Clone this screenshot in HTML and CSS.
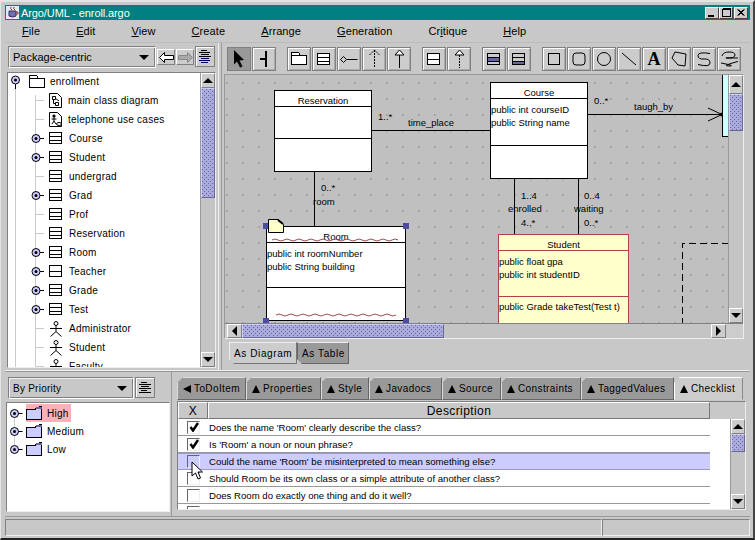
FILE: index.html
```html
<!DOCTYPE html>
<html lang="en">
<head>
    <meta charset="UTF-8">
    <title>Argo/UML - enroll.argo</title>
    <link rel="stylesheet" href="styles.css">
</head>
<body>

<svg class="defs" width="0" height="0">
    <symbol id="i-class" viewBox="0 0 14 13"><path d="M.5.5h12v11H.5zM.5 4.5h12M.5 8.5h12" fill="#fff" stroke="#000" shape-rendering="crispEdges"/></symbol>
    <symbol id="i-iface" viewBox="0 0 14 13"><path d="M.5.5h12v11H.5zM.5 6.5h12" fill="#fff" stroke="#000" shape-rendering="crispEdges"/></symbol>
    <symbol id="i-folder" viewBox="0 0 16 13"><path d="M.5 12.5V.5h7l2 3h6v9z M9.5 3.5H.5" fill="#fff" stroke="#000" shape-rendering="crispEdges"/></symbol>
    <symbol id="i-diagram" viewBox="0 0 14 15"><path d="M.5.5h8l4 4v10H.5z" fill="#fff" stroke="#000"/><path d="M3.5 3.5h3v3h-3zM4.5 6.5v4h2M6.5 9.5h3v3h-3zM6 5l4 3" fill="none" stroke="#000"/></symbol>
    <symbol id="i-usecase" viewBox="0 0 14 15"><path d="M.5.5h8l4 4v10H.5z" fill="#fff" stroke="#000"/><circle cx="5" cy="4" r="1.6"/><path d="M5 5v4M2.5 7h5M5 9l-2 3M5 9l2 3" fill="none" stroke="#000"/><ellipse cx="10" cy="12" rx="2.5" ry="1.5" fill="#fff" stroke="#000"/></symbol>
    <symbol id="i-actor" viewBox="0 0 14 16"><circle cx="7" cy="2.5" r="2" fill="#fff" stroke="#000"/><path d="M7 4.5v6M1 7.5h12M7 10.5l-5.500 5M7 10.500l5.500 5" fill="none" stroke="#000"/></symbol>
    <symbol id="i-open" viewBox="0 0 11 14"><circle cx="5.500" cy="5" r="4" fill="#ccccff" stroke="#000"/><circle cx="5.500" cy="5" r="1.500" fill="#000"/><path d="M5.500 9v5" stroke="#000"/></symbol>
    <symbol id="i-closed" viewBox="0 0 13 11"><circle cx="5" cy="5.500" r="4" fill="#ccccff" stroke="#000"/><circle cx="5" cy="5.500" r="1.500" fill="#000"/><path d="M9 5.500h4" stroke="#000"/></symbol>
    <symbol id="i-stub" viewBox="0 0 13 11"><path d="M4 5.500h9" stroke="#ccc"/></symbol>
    <symbol id="i-bluefolder" viewBox="0 0 17 14"><path d="M.5 3.500h9l1-2 5-1v13H.5z" fill="#ccccff" stroke="#000" shape-rendering="crispEdges"/><path d="M10 1h6v2h-6z" fill="#666699"/></symbol>
    <symbol id="i-lines" viewBox="0 0 14 14"><path d="M3 1.500h6M1 3.500h12M3 5.500h8M1 7.500h12M3 9.500h6M1 11.500h12" stroke="#000" shape-rendering="crispEdges"/></symbol>
    <symbol id="i-explorer" viewBox="0 0 14 16"><path d="M3 1.500h6M1 3.500h11M3 5.500h8M1 7.500h12" stroke="#000" shape-rendering="crispEdges"/><path d="M3 9.500h8M1 11.500h11M3 13.500h7" stroke="#000066" shape-rendering="crispEdges"/></symbol>
</svg>

<div class="window">
    <div class="titlebar">
        <svg class="title-icon" width="13" height="13" viewBox="0 0 13 13">
            <rect width="13" height="13" fill="#e8e8f0"/>
            <path d="M3 5h7v5q-3.500 2-7 0z" fill="#7070b0" stroke="#303060"/>
            <path d="M5 1q-1 2 1 3M8 1q-1 2 1 3M10 6h2v2h-2" fill="none" stroke="#a03030"/>
        </svg>
        <span class="title-text">Argo/UML - enroll.argo</span>
        <div class="win-buttons">
            <button class="win-btn"><svg width="8" height="8" viewBox="0 0 8 8"><path d="M0 6h6v2H0z"/></svg></button>
            <button class="win-btn"><svg width="9" height="9" viewBox="0 0 9 9"><path d="M.5 1.500h8v7h-8zM.5.500h8" fill="none" stroke="#000" shape-rendering="crispEdges"/></svg></button>
            <button class="win-btn win-close"><svg width="8" height="8" viewBox="0 0 8 8"><path d="M.5.500l6 6M6.500.500l-6 6M1.500.500l6 6M7.500.500l-6 6" stroke="#000" fill="none"/></svg></button>
        </div>
    </div>

    <div class="menubar">
        <span><u>F</u>ile</span>
        <span><u>E</u>dit</span>
        <span><u>V</u>iew</span>
        <span><u>C</u>reate</span>
        <span><u>A</u>rrange</span>
        <span><u>G</u>eneration</span>
        <span>Cr<u>i</u>tique</span>
        <span><u>H</u>elp</span>
    </div>

    <div class="top-split">
        <div class="nav-pane">
            <div class="nav-tools">
                <div class="combo combo-nav">Package-centric<i class="combo-arrow"></i></div>
                <button class="nav-btn">
                    <svg width="15" height="11" viewBox="0 0 15 11"><path d="M.5 5.500l5-5v3h9v4h-9v3z" fill="#fff" stroke="#000"/></svg>
                </button>
                <button class="nav-btn">
                    <svg width="15" height="11" viewBox="0 0 15 11"><path d="M14.500 5.500l-5-5v3h-9v4h9v3z" fill="#aaa" stroke="#888"/></svg>
                </button>
                <button class="icon-btn"><svg width="14" height="16"><use href="#i-explorer"/></svg></button>
            </div>
            <div class="tree-frame">
                <div class="tree-list">
                    <div class="tree-row lvl0"><svg class="h-open" width="11" height="14"><use href="#i-open"/></svg><svg class="ic-folder" width="16" height="13"><use href="#i-folder"/></svg><span>enrollment</span></div>
                    <div class="tree-row lvl1 tight"><svg width="13" height="11"><use href="#i-stub"/></svg><svg class="ic" width="14" height="15"><use href="#i-diagram"/></svg><span>main class diagram</span></div>
                    <div class="tree-row lvl1 tight"><svg width="13" height="11"><use href="#i-stub"/></svg><svg class="ic" width="14" height="15"><use href="#i-usecase"/></svg><span>telephone use cases</span></div>
                    <div class="tree-row lvl1"><svg width="13" height="11"><use href="#i-closed"/></svg><svg class="ic" width="14" height="13"><use href="#i-class"/></svg><span>Course</span></div>
                    <div class="tree-row lvl1"><svg width="13" height="11"><use href="#i-closed"/></svg><svg class="ic" width="14" height="13"><use href="#i-class"/></svg><span>Student</span></div>
                    <div class="tree-row lvl1"><svg width="13" height="11"><use href="#i-stub"/></svg><svg class="ic" width="14" height="13"><use href="#i-class"/></svg><span>undergrad</span></div>
                    <div class="tree-row lvl1"><svg width="13" height="11"><use href="#i-closed"/></svg><svg class="ic" width="14" height="13"><use href="#i-class"/></svg><span>Grad</span></div>
                    <div class="tree-row lvl1"><svg width="13" height="11"><use href="#i-stub"/></svg><svg class="ic" width="14" height="13"><use href="#i-class"/></svg><span>Prof</span></div>
                    <div class="tree-row lvl1"><svg width="13" height="11"><use href="#i-stub"/></svg><svg class="ic" width="14" height="13"><use href="#i-class"/></svg><span>Reservation</span></div>
                    <div class="tree-row lvl1"><svg width="13" height="11"><use href="#i-closed"/></svg><svg class="ic" width="14" height="13"><use href="#i-class"/></svg><span>Room</span></div>
                    <div class="tree-row lvl1"><svg width="13" height="11"><use href="#i-closed"/></svg><svg class="ic" width="14" height="13"><use href="#i-iface"/></svg><span>Teacher</span></div>
                    <div class="tree-row lvl1"><svg width="13" height="11"><use href="#i-closed"/></svg><svg class="ic" width="14" height="13"><use href="#i-class"/></svg><span>Grade</span></div>
                    <div class="tree-row lvl1"><svg width="13" height="11"><use href="#i-closed"/></svg><svg class="ic" width="14" height="13"><use href="#i-class"/></svg><span>Test</span></div>
                    <div class="tree-row lvl1"><svg width="13" height="11"><use href="#i-stub"/></svg><svg class="ic" width="14" height="16"><use href="#i-actor"/></svg><span>Administrator</span></div>
                    <div class="tree-row lvl1"><svg width="13" height="11"><use href="#i-stub"/></svg><svg class="ic" width="14" height="16"><use href="#i-actor"/></svg><span>Student</span></div>
                    <div class="tree-row lvl1"><svg width="13" height="11"><use href="#i-stub"/></svg><svg class="ic" width="14" height="16"><use href="#i-actor"/></svg><span>Faculty</span></div>
                </div>
                <div class="vscroll vscroll-nav">
                    <button class="sb-btn"><i class="tri-up"></i></button>
                    <div class="sb-thumb"></div>
                    <div class="sb-track"></div>
                    <button class="sb-btn"><i class="tri-down"></i></button>
                </div>
            </div>
        </div>

        <div class="editor-pane">
            <div class="toolbar">
                <div class="tool-group">
                    <button class="tool pressed"><svg width="18" height="20" viewBox="0 0 18 20"><path d="M4 1l10 10-4.500.5 3 6-2.500 1-3-6-3 3z"/></svg></button>
                    <button class="tool"><svg width="18" height="20" viewBox="0 0 18 20"><path d="M11 2v16M5 10h6" stroke="#000" stroke-width="2" fill="none" shape-rendering="crispEdges"/></svg></button>
                </div>
                <div class="tool-group">
                    <button class="tool"><svg width="18" height="14" viewBox="0 0 18 14"><use href="#i-folder" width="16" height="13" x="1"/></svg></button>
                    <button class="tool"><svg width="14" height="13"><use href="#i-class"/></svg></button>
                    <button class="tool"><svg width="18" height="9" viewBox="0 0 18 9"><path d="M.5 4.500l3-3 3 3-3 3zM6.500 4.500h11" fill="none" stroke="#000"/></svg></button>
                    <button class="tool"><svg width="11" height="20" viewBox="0 0 11 20"><path d="M.5 6l5-5 5 5M5.500 1v18" fill="none" stroke="#000" stroke-dasharray="2 1"/></svg></button>
                    <button class="tool"><svg width="11" height="20" viewBox="0 0 11 20"><path d="M1 6l4.500-5L10 6zM5.500 6v13" fill="#fff" stroke="#000"/></svg></button>
                </div>
                <div class="tool-group">
                    <button class="tool"><svg width="14" height="13"><use href="#i-iface"/></svg></button>
                    <button class="tool"><svg width="11" height="20" viewBox="0 0 11 20"><path d="M1 6l4.500-5L10 6z" fill="#fff" stroke="#000"/><path d="M5.500 6v13" stroke="#000" stroke-dasharray="2 1"/></svg></button>
                </div>
                <div class="tool-group">
                    <button class="tool"><svg width="14" height="13" viewBox="0 0 14 13"><rect x="1" y="5" width="11" height="3" fill="#666699"/><path d="M.5.5h12v11H.5zM.5 4.500h12M.5 8.500h12" fill="none" stroke="#000" shape-rendering="crispEdges"/></svg></button>
                    <button class="tool"><svg width="14" height="13" viewBox="0 0 14 13"><rect x="1" y="8" width="11" height="3" fill="#666699"/><path d="M.5.5h12v11H.5zM.5 4.500h12M.5 8.500h12" fill="none" stroke="#000" shape-rendering="crispEdges"/></svg></button>
                </div>
                <div class="tool-group">
                    <button class="tool"><svg width="14" height="14" viewBox="0 0 14 14"><path d="M1.500 1.500h11v11h-11z" fill="none" stroke="#000" shape-rendering="crispEdges"/></svg></button>
                    <button class="tool"><svg width="14" height="14" viewBox="0 0 14 14"><rect x="1" y="1" width="12" height="12" rx="3" fill="none" stroke="#000"/></svg></button>
                    <button class="tool"><svg width="16" height="16" viewBox="0 0 16 16"><circle cx="8" cy="8" r="6.500" fill="none" stroke="#000"/></svg></button>
                    <button class="tool"><svg width="16" height="14" viewBox="0 0 16 14"><path d="M1 1l14 12" stroke="#000" fill="none"/></svg></button>
                    <button class="tool tool-a">A</button>
                    <button class="tool"><svg width="18" height="18" viewBox="0 0 18 18"><path d="M5 2l11 2-1 12-7-1-6-7z" fill="none" stroke="#000"/></svg></button>
                    <button class="tool"><svg width="16" height="16" viewBox="0 0 16 16"><path d="M14 2.500Q2 .5 2 4.500t6 3.500 6 4-12 1.500" fill="none" stroke="#000"/></svg></button>
                    <button class="tool"><svg width="18" height="16" viewBox="0 0 18 16"><path d="M2 5Q3 1 9 1t6 3-7 3 8 0 0 4-7 4-8-3" fill="none" stroke="#000"/></svg></button>
                </div>
            </div>

            <div class="canvas-frame">
                <div class="canvas-row">
                    <div class="canvas">
                        <svg class="wires" width="505" height="250" viewBox="225 75 505 250">
                            <g stroke="#000" fill="none" shape-rendering="crispEdges">
                                <path d="M371 130.500h119M587 114.500h135M314.500 171v56M514.500 178v57M578.500 178v57"/>
                            </g>
                            <path d="M708 108l14 6.500-14 6.500" stroke="#000" fill="none"/>
                            <circle cx="722" cy="114.500" r="2"/>
                            <path d="M682.500 325V243H729" stroke="#000" fill="none" stroke-dasharray="7 4" shape-rendering="crispEdges"/>
                        </svg>

                        <div class="uml reservation">
                            <div class="uml-name">Reservation</div>
                            <div class="uml-attrs"></div>
                            <div class="uml-ops"></div>
                        </div>

                        <div class="uml course">
                            <div class="uml-name">Course</div>
                            <div class="uml-attrs">public int courseID<br>public String name</div>
                            <div class="uml-ops"></div>
                        </div>

                        <div class="uml room">
                            <div class="uml-name">Room</div>
                            <div class="uml-attrs">public int roomNumber<br>public String building</div>
                            <div class="uml-ops"></div>
                        </div>

                        <div class="uml uml-selected student">
                            <div class="uml-name">Student</div>
                            <div class="uml-attrs">public float gpa<br>public int studentID</div>
                            <div class="uml-ops">public Grade takeTest(Test t)</div>
                        </div>

                        <div class="teacher-edge"></div>

                        <span class="lbl l-res-mult">1..*</span>
                        <span class="lbl l-time">time_place</span>
                        <span class="lbl l-course-mult">0..*</span>
                        <span class="lbl l-taugh">taugh_by</span>
                        <span class="lbl l-room-mult">0..*</span>
                        <span class="lbl l-room">room</span>
                        <span class="lbl l-en1">1..4</span>
                        <span class="lbl l-en">enrolled</span>
                        <span class="lbl l-en2">4..*</span>
                        <span class="lbl l-wa1">0..4</span>
                        <span class="lbl l-wa">waiting</span>
                        <span class="lbl l-wa2">0..*</span>

                        <svg class="wavy" width="505" height="250" viewBox="225 75 505 250">
                            <path d="M272 240q3-2 6 0t6 0 6 0 6 0 6 0 6 0 6 0 6 0 6 0 6 0 6 0 6 0 6 0 6 0 6 0 6 0 6 0 6 0 6 0 6 0 6 0" stroke="#a05050" fill="none"/>
                            <path d="M276 315q3-2 6 0t6 0 6 0 6 0 6 0 6 0 6 0 6 0 6 0 6 0 6 0 6 0 6 0 6 0 6 0 6 0 6 0 6 0 6 0 6 0" stroke="#a05050" fill="none"/>
                            <g fill="#4c4ca0">
                                <rect x="263" y="223" width="6" height="6"/>
                                <rect x="403" y="223" width="6" height="6"/>
                                <rect x="263" y="318" width="6" height="6"/>
                                <rect x="403" y="318" width="6" height="6"/>
                            </g>
                            <path d="M268.500 219.500h10l5 5v8h-15z" fill="#ffffcc" stroke="#000"/>
                            <path d="M278 220l5 4" stroke="#000" stroke-width="2"/>
                        </svg>
                    </div>
                    <div class="vscroll vscroll-canvas">
                        <button class="sb-btn"><i class="tri-up"></i></button>
                        <div class="sb-thumb"></div>
                        <div class="sb-track"></div>
                        <button class="sb-btn"><i class="tri-down"></i></button>
                    </div>
                </div>
                <div class="hscroll">
                    <button class="sb-btn"><i class="tri-left"></i></button>
                    <div class="sb-thumb"></div>
                    <div class="sb-track"></div>
                    <button class="sb-btn"><i class="tri-right"></i></button>
                    <div class="sb-corner"></div>
                </div>
            </div>

            <div class="view-tabs">
                <div class="view-tab active">As Diagram</div>
                <div class="view-tab">As Table</div>
            </div>
        </div>
    </div>

    <div class="bottom-split">
        <div class="todo-pane">
            <div class="todo-tools">
                <div class="combo combo-todo">By Priority<i class="combo-arrow"></i></div>
                <button class="icon-btn"><svg width="14" height="14"><use href="#i-lines"/></svg></button>
            </div>
            <div class="todo-tree">
                <div class="todo-row"><svg width="14" height="11"><use href="#i-closed"/></svg><div class="todo-item hot"><svg width="17" height="14"><use href="#i-bluefolder"/></svg><span>High</span></div></div>
                <div class="todo-row"><svg width="14" height="11"><use href="#i-closed"/></svg><div class="todo-item"><svg width="17" height="14"><use href="#i-bluefolder"/></svg><span>Medium</span></div></div>
                <div class="todo-row"><svg width="14" height="11"><use href="#i-closed"/></svg><div class="todo-item"><svg width="17" height="14"><use href="#i-bluefolder"/></svg><span>Low</span></div></div>
            </div>
        </div>

        <div class="detail-pane">
            <div class="detail-tabs">
                <div class="dtab w-todo"><i class="tri-left small"></i>ToDoItem</div>
                <div class="dtab w-prop"><i class="tri-up small"></i>Properties</div>
                <div class="dtab w-style"><i class="tri-up small"></i>Style</div>
                <div class="dtab w-java"><i class="tri-up small"></i>Javadocs</div>
                <div class="dtab w-src"><i class="tri-up small"></i>Source</div>
                <div class="dtab w-con"><i class="tri-up small"></i>Constraints</div>
                <div class="dtab w-tag"><i class="tri-up small"></i>TaggedValues</div>
                <div class="dtab w-chk active"><i class="tri-up small"></i>Checklist</div>
            </div>
            <div class="check-frame">
                <div class="check-head">
                    <div class="head-x">X</div>
                    <div class="head-desc">Description</div>
                </div>
                <div class="check-body">
                    <div class="check-rows">
                        <div class="check-row"><div class="cb"><svg width="10" height="10" viewBox="0 0 10 10"><path d="M1.500 5l2.500 3.500L9 1" fill="none" stroke="#000" stroke-width="2.500"/></svg></div><div class="check-text">Does the name 'Room' clearly describe the class?</div></div>
                        <div class="check-row"><div class="cb"><svg width="10" height="10" viewBox="0 0 10 10"><path d="M1.500 5l2.500 3.500L9 1" fill="none" stroke="#000" stroke-width="2.500"/></svg></div><div class="check-text">Is 'Room' a noun or noun phrase?</div></div>
                        <div class="check-row selected"><div class="cb"></div><div class="check-text">Could the name 'Room' be misinterpreted to mean something else?</div></div>
                        <div class="check-row"><div class="cb"></div><div class="check-text">Should Room be its own class or a simple attribute of another class?</div></div>
                        <div class="check-row"><div class="cb"></div><div class="check-text">Does Room do exactly one thing and do it well?</div></div>
                        <div class="check-row"><div class="cb"></div><div class="check-text"></div></div>
                    </div>
                    <div class="check-gap"></div>
                    <div class="vscroll vscroll-check">
                        <button class="sb-btn"><i class="tri-up"></i></button>
                        <div class="sb-thumb"></div>
                        <div class="sb-track"></div>
                        <button class="sb-btn"><i class="tri-down"></i></button>
                    </div>
                </div>
            </div>
        </div>
    </div>

    <div class="statusbar">
        <div class="status-main"></div>
        <div class="status-side"></div>
    </div>
</div>

<svg class="pointer" width="14" height="20" viewBox="0 0 14 20">
    <path d="M1 1v14l3.500-3 2.500 6 2.500-1-2.500-6h4.500z" fill="#fff" stroke="#000"/>
</svg>

</body>
</html>
```

FILE: styles.css
```css
* {
    box-sizing: border-box;
}

body {
    margin: 0;
    width: 755px;
    height: 540px;
    overflow: hidden;
    position: relative;
    background-color: #cccccc;
    font-family: "Liberation Sans", Arial, sans-serif;
    font-size: 11px;
    color: #000;
}

button {
    padding: 0;
    margin: 0;
    font-family: inherit;
    background-color: #cccccc;
    display: flex;
    align-items: center;
    justify-content: center;
}

svg {
    display: block;
    flex: none;
}

.defs {
    position: absolute;
}

.window {
    width: 755px;
    height: 540px;
    padding: 3px 3px 2px 4px;
    display: flex;
    flex-direction: column;
    background-color: #c8c8c8;
    border-top: 2px solid #e4e4e4;
    border-left: 1px solid #e4e4e4;
    border-right: 2px solid #444;
    border-bottom: 2px solid #222;
}

/* title + menu */
.titlebar {
    height: 15px;
    background-color: #008080;
    color: #fff;
    display: flex;
    align-items: center;
    padding-left: 1px;
    flex: none;
}

.title-icon {
    margin-right: 2px;
}

.title-text {
    font-size: 11px;
    letter-spacing: -0.1px;
}

.win-buttons {
    margin-left: auto;
    margin-right: 2px;
    display: flex;
}

.win-btn {
    width: 14px;
    height: 12px;
    border: 1px solid;
    border-color: #fff #444 #444 #fff;
}

.win-close {
    margin-left: 1px;
}

.menubar {
    height: 22px;
    display: flex;
    align-items: center;
    gap: 36px;
    padding-left: 17px;
    letter-spacing: 0.1px;
    flex: none;
}

/* upper half */
.top-split {
    height: 328px;
    display: flex;
    flex: none;
    border-top: 1px solid #bbb;
}

.nav-pane {
    width: 214px;
    padding: 3px 2px 0;
    border-right: 1px solid #eee;
    flex: none;
}

.nav-tools {
    display: flex;
    align-items: flex-start;
    height: 26px;
    padding-left: 1px;
}

.combo {
    height: 22px;
    border: 1px solid;
    border-color: #808080 #fff #fff #808080;
    box-shadow: inset 1px 1px 0 #eee, inset -1px -1px 0 #808080;
    display: flex;
    align-items: center;
    padding-left: 4px;
    flex: none;
}

.combo-nav {
    width: 148px;
}

.combo-todo {
    width: 126px;
    font-size: 10px;
    letter-spacing: 0.25px;
}

.combo-arrow {
    margin-left: auto;
    margin-right: 6px;
    border-left: 5px solid transparent;
    border-right: 5px solid transparent;
    border-top: 5px solid #000;
}

.nav-btn {
    width: 18px;
    height: 16px;
    margin-top: 3px;
    margin-left: 1px;
    border: 1px solid;
    border-color: #fff #808080 #808080 #fff;
}

.icon-btn {
    width: 20px;
    height: 21px;
    margin-left: 1px;
    border: 1px solid #808080;
    box-shadow: inset 1px 1px 0 #fff;
}

.tree-frame {
    display: flex;
    height: 296px;
    background-color: #fff;
    border: 1px solid #808080;
    border-right-color: #eee;
    border-bottom-color: #eee;
    overflow: hidden;
}

.tree-list {
    flex: 1;
    font-size: 10px;
    letter-spacing: 0.25px;
    background-image: linear-gradient(#ccc, #ccc), linear-gradient(#ccc, #ccc);
    background-repeat: no-repeat;
    background-size: 1px 100%, 1px 100%;
    background-position: 7px 14px, 27px 22px;
    overflow: hidden;
}

.tree-row {
    height: 19px;
    display: flex;
    align-items: center;
    white-space: nowrap;
    position: relative;
    top: -1px;
}

.lvl0 {
    padding-left: 2px;
}

.ic-folder {
    margin-left: 8px;
    margin-right: 5px;
}

.lvl1 {
    padding-left: 23px;
}

.lvl1 .ic {
    margin-left: 5px;
    margin-right: 6px;
}

.tight .ic {
    margin-left: 5px;
    margin-right: 5px;
}

/* scrollbars */
.vscroll {
    width: 15px;
    display: flex;
    flex-direction: column;
    flex: none;
    background-color: #cccccc;
    border-left: 1px solid #999;
}

.hscroll {
    height: 15px;
    display: flex;
    flex: none;
    background-color: #cccccc;
    border-top: 1px solid #808080;
    padding-left: 2px;
}

.sb-btn {
    width: 100%;
    height: 15px;
    flex: none;
    border: 1px solid;
    border-color: #fff #808080 #808080 #fff;
}

.hscroll .sb-btn {
    width: 15px;
    height: 100%;
}

.sb-thumb {
    flex: none;
    background-color: #aaaadd;
    background-image: radial-gradient(circle at 0.5px 0.5px, #666699 0.72px, transparent 0.72px), radial-gradient(circle at 0.5px 0.5px, #666699 0.72px, transparent 0.72px);
    background-size: 4px 4px;
    background-position: 0 0, 2px 2px;
    border: 1px solid #7777aa;
    border-color: #ccccff #666699 #666699 #ccccff;
}

.sb-track {
    flex: 1;
    background-color: #c4c4c4;
}

.sb-corner {
    width: 17px;
    flex: none;
}

.vscroll-nav .sb-thumb {
    height: 110px;
}

.vscroll-canvas .sb-btn:first-child {
    height: 19px;
}

.vscroll-canvas .sb-thumb {
    height: 37px;
}

.hscroll .sb-thumb {
    width: 202px;
}

.vscroll-check .sb-thumb {
    height: 18px;
}

.tri-up, .tri-down, .tri-left, .tri-right {
    display: block;
    width: 0;
    height: 0;
    flex: none;
}

.tri-up {
    border-left: 5px solid transparent;
    border-right: 5px solid transparent;
    border-bottom: 5px solid #000;
}

.tri-down {
    border-left: 5px solid transparent;
    border-right: 5px solid transparent;
    border-top: 5px solid #000;
}

.tri-left {
    border-top: 5px solid transparent;
    border-bottom: 5px solid transparent;
    border-right: 5px solid #000;
}

.tri-right {
    border-top: 5px solid transparent;
    border-bottom: 5px solid transparent;
    border-left: 5px solid #000;
}

/* diagram side */
.editor-pane {
    flex: 1;
    padding-left: 2px;
    border-left: 1px solid #999;
    margin-left: 2px;
    display: flex;
    flex-direction: column;
    min-width: 0;
}

.toolbar {
    height: 31px;
    display: flex;
    gap: 11px;
    padding: 4px 0 0 3px;
    flex: none;
}

.tool-group {
    display: flex;
    gap: 1px;
}

.tool {
    width: 24px;
    height: 24px;
    border: 1px solid #808080;
    box-shadow: inset 1px 1px 0 #fff, inset -1px -1px 0 #aaa;
}

.tool.pressed {
    background-color: #999999;
    box-shadow: none;
}

.tool-a {
    font-family: "Liberation Serif", serif;
    font-weight: bold;
    font-size: 18px;
    line-height: 1;
}

.canvas-frame {
    width: 520px;
    height: 265px;
    border: 1px solid #999;
    border-right-color: #eee;
    border-bottom-color: #eee;
    flex: none;
    display: flex;
    flex-direction: column;
}

.canvas-row {
    flex: 1;
    display: flex;
    min-height: 0;
}

.canvas {
    flex: 1;
    position: relative;
    overflow: hidden;
    background-color: #c0c0c0;
    background-image: radial-gradient(circle at 1px 1px, #a6a6a6 1px, transparent 1.1px);
    background-size: 16px 16px;
    background-position: 1px 7px;
}

.wires, .wavy {
    position: absolute;
    left: 0;
    top: 0;
}

.wavy {
    pointer-events: none;
}

.uml {
    position: absolute;
    background-color: #fff;
    border: 1px solid #000;
    display: flex;
    flex-direction: column;
    font-size: 9.5px;
    line-height: 13px;
}

.uml-name {
    height: 16px;
    text-align: center;
    border-bottom: 1px solid #000;
    padding-top: 3px;
    flex: none;
}

.uml-attrs {
    border-bottom: 1px solid #000;
    flex: none;
    padding-top: 4px;
}

.uml-ops {
    flex: 1;
    padding-top: 3px;
}

.reservation {
    left: 49px;
    top: 15px;
    width: 98px;
    height: 82px;
}

.reservation .uml-attrs {
    height: 32px;
}

.course {
    left: 265px;
    top: 7px;
    width: 98px;
    height: 97px;
}

.course .uml-attrs {
    height: 47px;
}

.room {
    left: 41px;
    top: 151px;
    width: 140px;
    height: 95px;
}

.room .uml-attrs {
    height: 45px;
}

.student {
    left: 273px;
    top: 159px;
    width: 131px;
    height: 120px;
    background-color: #ffffcc;
    border-color: #b04050;
}

.student .uml-name, .student .uml-attrs {
    border-bottom-color: #b04050;
}

.student .uml-attrs {
    height: 46px;
}

.teacher-edge {
    position: absolute;
    left: 497px;
    top: -1px;
    width: 20px;
    height: 63px;
    background-color: #ccffff;
    border: 1px solid #000;
}

.lbl {
    position: absolute;
    font-size: 9.5px;
    line-height: 12px;
    white-space: nowrap;
}

.l-res-mult { left: 153px; top: 36px; }
.l-time { left: 183px; top: 42px; }
.l-course-mult { left: 369px; top: 20px; }
.l-taugh { left: 409px; top: 26px; }
.l-room-mult { left: 96px; top: 107px; }
.l-room { left: 88px; top: 121px; }
.l-en1 { left: 296px; top: 115px; }
.l-en { left: 283px; top: 128px; }
.l-en2 { left: 296px; top: 142px; }
.l-wa1 { left: 359px; top: 115px; }
.l-wa { left: 349px; top: 128px; }
.l-wa2 { left: 359px; top: 142px; }

.view-tabs {
    display: flex;
    padding: 3px 0 0 5px;
    flex: 1;
    font-size: 10px;
    letter-spacing: 0.6px;
    white-space: nowrap;
}

.view-tab {
    height: 22px;
    padding: 0 4px;
    display: flex;
    align-items: center;
    background-color: #999999;
    border: 1px solid #666;
    border-top-color: #eee;
    clip-path: polygon(0 0, 100% 0, 100% 100%, 5px 100%, 0 calc(100% - 5px));
}

.view-tab.active {
    background-color: #cccccc;
    border-color: #eee #777 #777 #eee;
    width: 68px;
}

.view-tab:not(.active) {
    width: 52px;
}

/* lower half */
.bottom-split {
    height: 146px;
    display: flex;
    flex: none;
    border-top: 1px solid #eee;
    box-shadow: inset 0 1px 0 #999;
}

.todo-pane {
    width: 167px;
    padding: 6px 0 0 1px;
    flex: none;
    border-right: 1px solid #999;
}

.todo-tools {
    display: flex;
    height: 25px;
    padding-left: 2px;
}

.todo-tools .icon-btn {
    width: 20px;
    height: 21px;
    margin-left: 1px;
}

.todo-tree {
    width: 164px;
    height: 110px;
    background-color: #fff;
    border: 1px solid #808080;
    border-right-color: #eee;
    border-bottom-color: #eee;
    padding: 1px 0 0 2px;
    font-size: 10px;
    letter-spacing: 0.25px;
    background-image: linear-gradient(#ccc, #ccc);
    background-repeat: no-repeat;
    background-size: 1px 36px;
    background-position: 7px 10px;
}

.todo-row {
    height: 18px;
    display: flex;
    align-items: center;
    gap: 3px;
}

.todo-item {
    height: 18px;
    width: 45px;
    display: flex;
    align-items: center;
    gap: 4px;
}

.todo-item.hot {
    background-color: #ffb0b8;
}

.detail-pane {
    flex: 1;
    padding: 6px 0 0 4px;
    min-width: 0;
}

.detail-tabs {
    height: 24px;
    display: flex;
    padding-left: 1px;
    font-size: 10px;
    letter-spacing: 0.4px;
}

.dtab {
    height: 23px;
    display: flex;
    align-items: center;
    gap: 3px;
    padding-left: 5px;
    background-color: #999999;
    border: 1px solid #666;
    border-top-color: #ddd;
    border-left-color: #ddd;
    clip-path: polygon(6px 0, 100% 0, 100% 100%, 0 100%, 0 6px);
    flex: none;
}

.dtab.active {
    background-color: #cccccc;
    border-color: #fff #888 #ccc #fff;
}

.tri-up.small {
    border-left-width: 4.5px;
    border-right-width: 4.5px;
    border-bottom-width: 8px;
}

.tri-left.small {
    border-top-width: 4.5px;
    border-bottom-width: 4.5px;
    border-right-width: 8px;
}

.w-todo { width: 69px; }
.w-prop { width: 75px; }
.w-style { width: 48px; }
.w-java { width: 73px; }
.w-src { width: 59px; }
.w-con { width: 80px; }
.w-tag { width: 93px; }
.w-chk { width: 69px; }

.check-frame {
    width: 569px;
    height: 109px;
    margin-left: 1px;
    border: 1px solid #808080;
    border-right-color: #eee;
    border-bottom-color: #eee;
    display: flex;
    flex-direction: column;
    overflow: hidden;
}

.check-head {
    height: 17px;
    display: flex;
    flex: none;
}

.head-x, .head-desc {
    display: flex;
    align-items: center;
    justify-content: center;
    border: 1px solid;
    border-color: #fff #777 #777 #fff;
    font-size: 12px;
    letter-spacing: 0.4px;
}

.head-x {
    width: 30px;
}

.head-desc {
    width: 502px;
}

.check-body {
    flex: 1;
    display: flex;
    min-height: 0;
    background-color: #fff;
}

.check-rows {
    width: 532px;
    flex: none;
    overflow: hidden;
}

.check-row {
    height: 17px;
    display: flex;
    align-items: center;
    border-bottom: 1px solid #999;
    font-size: 9.6px;
}

.check-row.selected {
    background-color: #ccccff;
    border: 1px solid #9999cc;
    border-width: 1px 0 1px 0;
}

.cb {
    width: 13px;
    height: 13px;
    margin-left: 9px;
    border: 1px solid;
    border-color: #666 #eee #eee #666;
    display: flex;
    align-items: center;
    justify-content: center;
    flex: none;
}

.check-text {
    margin-left: 9px;
    white-space: nowrap;
}

.check-gap {
    width: 20px;
    flex: none;
}

.vscroll-check {
    height: 90px;
}

/* status */
.statusbar {
    flex: 1;
    display: flex;
    padding-top: 2px;
    border-top: 1px solid #999;
}

.status-main {
    flex: 1;
    border: 1px solid;
    border-color: #808080 #eee #eee #808080;
}

.status-side {
    width: 148px;
    border: 1px solid;
    border-color: #808080 #eee #eee #808080;
}

.pointer {
    position: absolute;
    left: 191px;
    top: 461px;
}
```
